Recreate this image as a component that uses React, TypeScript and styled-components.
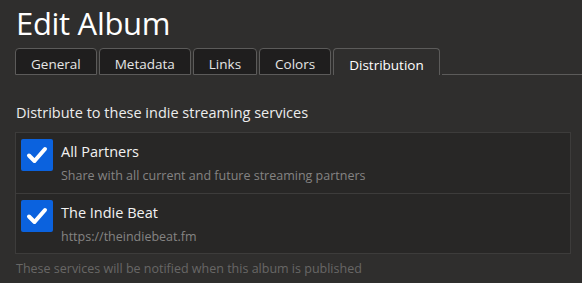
import styled, { createGlobalStyle } from "styled-components";

const tabs = ["General", "Metadata", "Links", "Colors", "Distribution"];

const services = [
    { name: "All Partners", detail: "Share with all current and future streaming partners" },
    { name: "The Indie Beat", detail: "https://theindiebeat.fm" },
];

export default function App() {
    return (
        <SPage>
            <GlobalStyle />
            <STitle>Edit Album</STitle>
            <STabBar>
                {tabs.map((t) => (
                    <STab key={t} $active={t === "Distribution"}>
                        {t}
                    </STab>
                ))}
                <STabFill />
            </STabBar>
            <SSection>
                <SLabel>Distribute to these indie streaming services</SLabel>
                <SList>
                    {services.map((s) => (
                        <SRow key={s.name}>
                            <SCheck>
                                <svg width="22" height="18" viewBox="0 0 22 18">
                                    <path
                                        d="M3 9.5 L8.5 15 L19 3"
                                        fill="none"
                                        stroke="#fff"
                                        strokeWidth="4"
                                        strokeLinecap="round"
                                        strokeLinejoin="round"
                                    />
                                </svg>
                            </SCheck>
                            <SRowText>
                                <SName>{s.name}</SName>
                                <SDetail>{s.detail}</SDetail>
                            </SRowText>
                        </SRow>
                    ))}
                </SList>
                <SHint>These services will be notified when this album is published</SHint>
            </SSection>
        </SPage>
    );
}

const GlobalStyle = createGlobalStyle`
    html, body {
        margin: 0;
        background: #2f2e2d;
    }
    body {
        font-family: "Open Sans", "Noto Sans", sans-serif;
        color: #f2f2f2;
    }
`;

const SPage = styled.main`
    width: 582px;
    height: 283px;
    padding: 0 0 0 15px;
    box-sizing: border-box;
    overflow: hidden;
`;

const STitle = styled.h1`
    margin: 0;
    padding: 3px 0 0 1px;
    font-size: 31px;
    font-weight: 400;
    line-height: 40px;
    letter-spacing: -0.3px;
    color: #ffffff;
`;

const STabBar = styled.div`
    display: flex;
    align-items: flex-end;
    gap: 2px;
    margin-top: 5px;
    height: 27px;
`;

const STab = styled.div<{ $active?: boolean }>`
    box-sizing: border-box;
    height: 27px;
    padding: 5px 15px 0;
    display: flex;
    align-items: center;
    font-size: 13.5px;
    color: ${({ $active }) => ($active ? "#ffffff" : "#e6e6e6")};
    background: ${({ $active }) => ($active ? "#2f2e2d" : "#1f1e1e")};
    border: 1px solid #5c5b5a;
    border-bottom: ${({ $active }) => ($active ? "none" : "1px solid #5c5b5a")};
    border-radius: 4px 4px 0 0;
`;

const STabFill = styled.div`
    flex: 1;
    height: 1px;
    background: #5c5b5a;
`;

const SSection = styled.section`
    padding-top: 28px;
    width: 556px;
`;

const SLabel = styled.div`
    font-size: 14.5px;
    line-height: 20px;
    padding-left: 1px;
    margin-bottom: 9px;
    color: #ececec;
`;

const SList = styled.div`
    border: 1px solid #3d3c3b;
    background: #282726;
`;

const SRow = styled.div`
    display: flex;
    gap: 8px;
    padding: 6px 5px;
    height: 60px;
    box-sizing: border-box;

    & + & {
        border-top: 1px solid #3d3c3b;
    }
`;

const SCheck = styled.div`
    width: 32px;
    height: 32px;
    flex: none;
    border-radius: 2px;
    background: #0b62de;
    display: flex;
    align-items: center;
    justify-content: center;
`;

const SRowText = styled.div`
    display: flex;
    flex-direction: column;
    padding-top: 4px;
`;

const SName = styled.div`
    font-size: 14.5px;
    line-height: 18px;
    color: #f2f2f2;
`;

const SDetail = styled.div`
    margin-top: 6px;
    font-size: 12.5px;
    line-height: 17px;
    color: #858483;
`;

const SHint = styled.div`
    margin-top: 6px;
    padding-left: 1px;
    font-size: 12.5px;
    line-height: 17px;
    color: #686766;
`;
